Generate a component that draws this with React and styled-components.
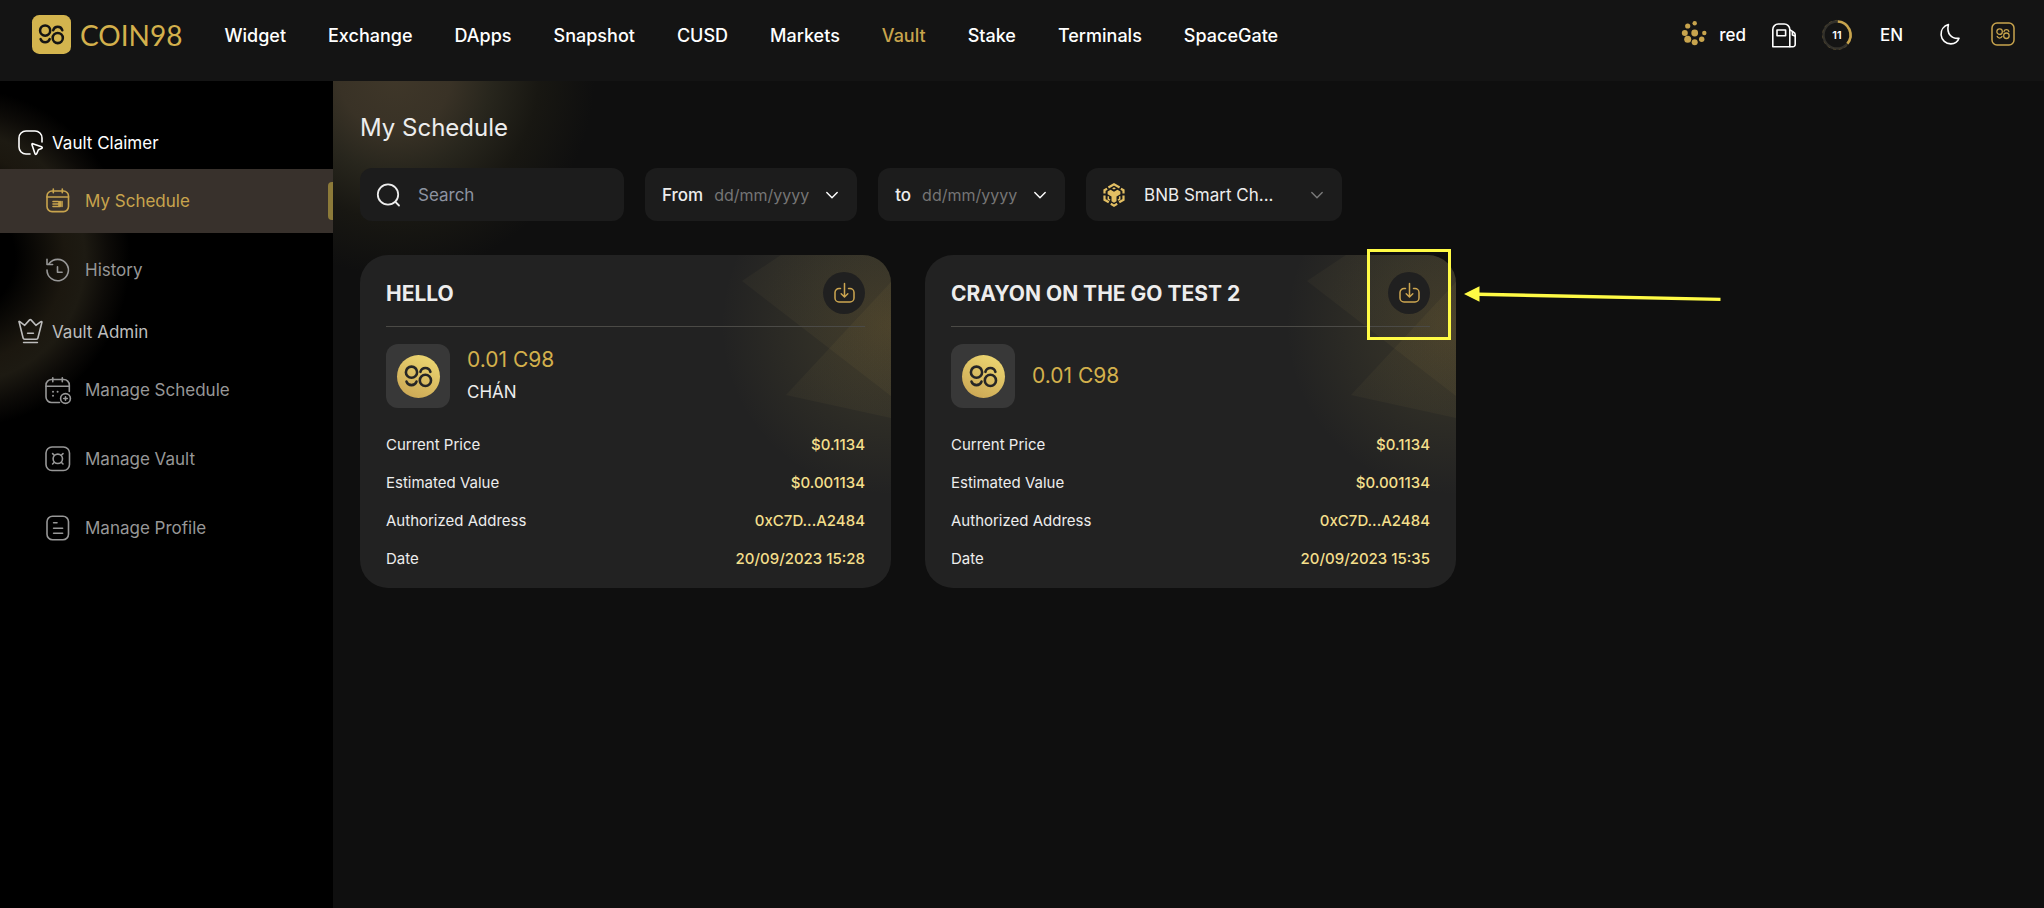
import React from 'react';
import styled, { createGlobalStyle, css } from 'styled-components';

const GOLD = '#c8a44d';

const GlobalStyle = createGlobalStyle`
  *, *::before, *::after { box-sizing: border-box; }
  body {
    margin: 0;
    background: #0f0f0f;
    color: #ededed;
    font-family: Inter, "Liberation Sans", sans-serif;
    font-size: 17px;
    -webkit-font-smoothing: antialiased;
  }
  h1, h2, h3, p, ul, dl, dd { margin: 0; padding: 0; }
  button, input, select { font: inherit; color: inherit; border: 0; background: none; padding: 0; outline: 0; }
  button { cursor: pointer; }
  a { color: inherit; text-decoration: none; }
  svg { display: block; flex: none; overflow: visible; }
`;

/* ---------- page frame ---------- */

const Page = styled.div`
  display: flex;
  flex-direction: column;
  min-height: 100vh;
`;

const Header = styled.header`
  display: flex;
  align-items: center;
  height: 81px;
  padding: 0 29px 12px 32px;
  background: #141414;
`;

const Brand = styled.a`
  display: flex;
  align-items: center;
  gap: 9px;
  margin-right: 42px;
`;

const Wordmark = styled.span`
  font-family: Lato, "Liberation Sans", sans-serif;
  font-size: 28px;
  line-height: 32px;
  color: #d3b04c;
`;

const Nav = styled.nav`
  display: flex;
  gap: 42px;
  padding-top: 1px;
  font-size: 18px;
  font-weight: 500;
`;

const NavLink = styled.a`
  color: ${(p) => (p.$active ? GOLD : '#ffffff')};
`;

const Tools = styled.div`
  display: flex;
  align-items: center;
  gap: 26px;
  margin-left: auto;
  color: #ffffff;
`;

const Wallet = styled.button`
  display: flex;
  align-items: center;
  gap: 12px;
  font-size: 17px;
  font-weight: 500;
`;

const IconButton = styled.button`
  display: grid;
  place-items: center;
  color: ${(p) => (p.$gold ? GOLD : '#ffffff')};
`;

const Language = styled.button`
  padding: 0 12px 0 2px;
  font-size: 17px;
  font-weight: 500;
`;

const Progress = styled.div`
  display: grid;
  place-items: center;
  width: 30px;
  height: 30px;
  font-size: 11px;
  font-weight: 600;

  > * { grid-area: 1 / 1; }
`;

const Body = styled.div`
  display: flex;
  flex: 1;
`;

/* ---------- sidebar ---------- */

const Sidebar = styled.aside`
  flex: 0 0 333px;
  padding-top: 37px;
  background:
    radial-gradient(circle at -40px 177px, transparent 55px, #1b170f 105px, #1d1a12 125px, #0d0b08 148px, transparent 170px) 0 0 / 100% 343px no-repeat,
    #000000;
`;

const Group = styled.h2`
  display: flex;
  align-items: center;
  gap: 9px;
  height: 51px;
  padding-left: 18px;
  padding-bottom: 2px;
  font-size: 17px;
  font-weight: 400;
  color: ${(p) => (p.$muted ? '#bdbdbd' : '#ffffff')};
`;

const Links = styled.nav`
  display: flex;
  flex-direction: column;
  gap: 5px;
  margin-bottom: 5px;
`;

const SideLink = styled.a`
  display: flex;
  align-items: center;
  gap: 14px;
  height: 64px;
  padding-left: 45px;
  color: #979797;

  ${(p) => p.$active && css`
    color: ${GOLD};
    background: #38312c;

    &::after {
      content: '';
      width: 5px;
      height: 38px;
      margin-left: auto;
      border-radius: 4px 0 0 4px;
      background: #8c7a39;
    }
  `}
`;

/* ---------- content ---------- */

const Main = styled.main`
  flex: 1;
  min-width: 0;
  padding: 31px 23px 40px 27px;
  background:
    radial-gradient(circle 200px at 62px -6px, #3f3729 0, #393226 28%, #28261d 48%, #181712 72%, #0f0f0f 100%) 0 0 / 400px 200px no-repeat,
    #0f0f0f;
`;

const Title = styled.h1`
  margin-bottom: 24px;
  font-size: 24px;
  font-weight: 400;
  line-height: 32px;
`;

const Filters = styled.form`
  display: flex;
  flex-wrap: wrap;
  gap: 21px;
  margin-bottom: 34px;
`;

const Field = styled.label`
  display: flex;
  align-items: center;
  height: 53px;
  padding: 0 19px 0 17px;
  border-radius: 12px;
  background: #1c1c1c;
`;

const SearchField = styled(Field)`
  flex: 0 0 264px;
  gap: 17px;
  min-width: 0;
`;

const SearchInput = styled.input`
  flex: 1;
  width: 100%;
  min-width: 0;

  &::placeholder { color: #8d93a1; opacity: 1; }
`;

const DateLabel = styled.span`
  margin-right: 11px;
  font-weight: 500;
`;

const DateInput = styled.input`
  width: 97px;
  margin-right: 15px;
  font-size: 16px;

  &::placeholder { color: #757575; opacity: 1; }
`;

const ChainField = styled(Field)`
  flex: 0 0 256px;
  gap: 19px;
`;

const ChainSelect = styled.select`
  flex: 1;
  min-width: 0;
  appearance: none;
`;

const Cards = styled.div`
  display: grid;
  grid-template-columns: repeat(3, 1fr);
  gap: 34px;
`;

const Card = styled.article`
  position: relative;
  isolation: isolate;
  padding: 17px 26px 19px;
  border-radius: 28px;
  background: #222222;
`;

const Backdrop = styled.div`
  position: absolute;
  inset: 0;
  z-index: -1;
  display: flex;
  justify-content: flex-end;
  overflow: hidden;
  border-radius: inherit;
`;

const CardHead = styled.header`
  display: flex;
  align-items: center;
  justify-content: space-between;
  padding-bottom: 12px;
  border-bottom: 1px solid #4b4a46;
`;

const CardTitle = styled.h3`
  font-size: 21px;
  font-weight: 700;
`;

const ClaimSlot = styled.div`
  position: relative;
`;

const ClaimButton = styled.button`
  display: grid;
  place-items: center;
  width: 42px;
  height: 42px;
  border-radius: 50%;
  background: #202020;
  color: #cda650;
`;

const Highlight = styled.div`
  position: absolute;
  left: -21px;
  top: -23px;
  width: 84px;
  height: 91px;
  border: 3px solid #fffb45;
  pointer-events: none;
`;

const Arrow = styled.svg`
  position: absolute;
  left: 76px;
  top: 12px;
  pointer-events: none;
`;

const Token = styled.div`
  display: flex;
  align-items: center;
  gap: 17px;
  margin: 17px 0 27px;
`;

const TokenIcon = styled.div`
  display: grid;
  place-items: center;
  width: 64px;
  height: 64px;
  border-radius: 12px;
  background: #383838;
`;

const Amount = styled.p`
  font-size: 21px;
  line-height: 32px;
  color: #d3b04c;
`;

const Note = styled.p`
  font-size: 17px;
  line-height: 32px;
`;

const Details = styled.dl`
  display: grid;
  gap: 18px;
  font-size: 15px;
  line-height: 20px;
`;

const Detail = styled.div`
  display: flex;
  justify-content: space-between;

  dd { color: #f4df8b; font-weight: 500; }
`;

/* ---------- drawings ---------- */

const Emblem = ({ width = 2.6 }) => (
  <g fill="none" strokeWidth={width} strokeLinecap="round">
    <circle cx="14.5" cy="17.2" r="5.6" />
    <circle cx="28.4" cy="25.4" r="5.6" />
    <path d="M23.4 16.8a5.2 5.2 0 0 1 10 0" />
    <path d="M9.5 26.6a5.3 5.3 0 0 0 10 0" />
  </g>
);

const LogoMark = () => (
  <svg width="39" height="39" viewBox="0 0 43 43" stroke="#141414" aria-hidden="true">
    <rect width="43" height="43" rx="8" fill="#d3b44e" stroke="none" />
    <Emblem width={2.8} />
  </svg>
);

const Coin = () => (
  <svg width="43" height="43" viewBox="0 0 43 43" stroke="#262626" aria-hidden="true">
    <defs>
      <linearGradient id="coin" x1="0.25" y1="1" x2="0.75" y2="0">
        <stop offset="0" stopColor="#cba755" />
        <stop offset="1" stopColor="#ecd671" />
      </linearGradient>
    </defs>
    <circle cx="21.5" cy="21.5" r="21.5" fill="url(#coin)" stroke="none" />
    <Emblem />
  </svg>
);

const BadgeIcon = () => (
  <svg width="24" height="24" viewBox="0 0 24 24" fill="none" stroke="currentColor" aria-hidden="true">
    <rect x="1" y="0" width="22" height="22" rx="5" strokeWidth="1.5" />
    <g transform="translate(1.5 0.3) scale(0.49)"><Emblem width={2.6} /></g>
  </svg>
);

const DotsIcon = () => (
  <svg width="25" height="29" viewBox="0 0 25 29" fill={GOLD} aria-hidden="true">
    {[[12.7, 3.3, 2.2], [5.7, 6, 2.6], [2.8, 13, 3], [12.7, 13, 3.4], [22.3, 13, 2.2], [5.7, 19.3, 3.5], [12.7, 22.3, 3], [19.7, 19.3, 2.7]].map(([x, y, r]) => (
      <circle key={`${x}-${y}`} cx={x} cy={y} r={r} />
    ))}
  </svg>
);

const Line = ({ size = 26, stroke = 1.6, children }) => (
  <svg width={size} height={size} viewBox={`0 0 ${size} ${size}`} fill="none" stroke="currentColor" strokeWidth={stroke} strokeLinecap="round" strokeLinejoin="round" aria-hidden="true">
    {children}
  </svg>
);

const GasIcon = () => (
  <Line size={24}>
    <path d="M.8 23.800V6.500A5.500 5.500 0 0 1 6.300 1h6a5.500 5.500 0 0 1 5.500 5.500v17.300z" />
    <rect x="5" y="7" width="8.6" height="5.8" />
    <path d="M18 6.800l3.600 2.400a3 3 0 0 1 1.600 2.600v9.400a2.400 2.400 0 0 1-2.400 2.600H18" />
    <path d="M20.400 9v3l2.600 1" />
  </Line>
);

const MoonIcon = () => (
  <Line size={24}>
    <path d="M7.400 1.600C2.800 3-.4 7 .1 12c.5 5.200 4.700 8.900 9.700 8.900 3.900 0 7-2.100 8.200-5.600C10.800 16 5.200 11 7.400 1.600z" />
  </Line>
);

const RingIcon = () => (
  <svg width="30" height="30" viewBox="0 0 30 30" fill="none" aria-hidden="true">
    <circle cx="15" cy="15" r="13.5" stroke="#33312b" strokeWidth="2.4" />
    <circle cx="15" cy="15" r="14.6" stroke="#6a5a35" strokeWidth="0.5" strokeDasharray="3 3" />
    <path d="M15.800 1.500A13.500 13.500 0 0 1 25.400 23.600" stroke={GOLD} strokeWidth="2.6" />
  </svg>
);

const ClaimerIcon = () => (
  <Line size={25}>
    <path d="M24 12V8a7 7 0 0 0-7-7H8a7 7 0 0 0-7 7v9a7 7 0 0 0 7 7h4" />
    <path d="M14.800 13.700l8.700 3c1 .4 1 1.300.1 1.700l-3.200 1.400-1.700 3.900c-.4.900-1.500.9-1.800-.1l-2.900-8.900c-.2-.7.200-1.200.8-1z" />
  </Line>
);

const CrownIcon = () => (
  <Line size={25}>
    <path d="M1.200 3.300c-.6-.8-.2-1.100.6-.7L6.700 6.300 11.600.9q.7-.7 1.400 0l4.900 5.400 5-3.600c.8-.5 1.200-.1 1 .7L19.900 19q-.3 1.200-1.500 1.200H6.600q-1.200 0-1.500-1.200z" />
    <path d="M9.600 14.200h5.800M5.600 23.500h13.800" />
  </Line>
);

const ScheduleIcon = () => (
  <Line>
    <rect x="2" y="3" width="21.5" height="20.6" rx="5" />
    <path d="M2 9h21.500M8.300 1v3.800M17.300 1v3.800" />
    <path d="M8 13.500h5M8 16h5M8 18.500h5M14 13.500v5M15.200 13.500v5M17 13.500v5" />
  </Line>
);

const HistoryIcon = () => (
  <Line>
    <path d="M2 13a10.700 10.700 0 1 0 2-6.200" />
    <path d="M2 2.200v5.300h5.600M12.500 9.800v5.400h4.600" />
  </Line>
);

const ManageScheduleIcon = () => (
  <Line>
    <path d="M24.300 14.500V8a5.500 5.500 0 0 0-5.500-5.500H6.500A5.500 5.500 0 0 0 1 8v12a5.500 5.500 0 0 0 5.500 5.500h8" />
    <path d="M1 9.300h23.300M7.800.7v4M17.300.7v4" />
    <circle cx="20.5" cy="21.5" r="4.9" />
    <path d="M20.500 19.700v3.600M18.700 21.500h3.600" />
    <path strokeWidth="2" d="M8 14.700h.01M12.600 14.700h.01M8 18.700h.01" />
  </Line>
);

const ManageVaultIcon = () => (
  <Line>
    <rect x="1" y="1" width="23.5" height="23.5" rx="6" />
    <circle cx="12.8" cy="12.8" r="4.7" />
    <path d="M9.300 9.300L7.600 7.600M16.300 9.300L18 7.600M9.300 16.300L7.600 18M16.300 16.300L18 18" />
  </Line>
);

const ProfileIcon = () => (
  <Line>
    <rect x="2" y="1.2" width="21.5" height="23.5" rx="5.5" />
    <path d="M8.600 7.800H12M8.600 13.200h9M8.600 18.300h9" />
  </Line>
);

const SearchIcon = () => (
  <Line size={24} stroke={1.8}>
    <circle cx="11" cy="11.5" r="10.2" />
    <path d="M18.500 19l3.500 3.500" />
  </Line>
);

const Chevron = ({ color = '#ffffff' }) => (
  <svg width="12" height="12" viewBox="0 0 12 12" fill="none" stroke={color} strokeWidth="1.4" strokeLinecap="round" strokeLinejoin="round" aria-hidden="true">
    <path d="M.8 3.500L6 8.800l5.200-5.300" />
  </svg>
);

const ChainIcon = () => (
  <svg width="22" height="24" viewBox="0 0 22 24" fill="none" stroke="#e3bf63" strokeWidth="2.2" aria-hidden="true">
    <path d="M5.400 4.500L11 1.300l5.600 3.200" />
    <path d="M1.500 10.500V7.200l2.600-1.500M20.500 10.500V7.200l-2.600-1.500" />
    <path d="M1.500 12.600v4.200l4.300 2.500M20.500 12.600v4.200l-4.300 2.500" />
    <path d="M7.800 20.800l3.200 1.900 3.200-1.900" />
    <path d="M5.300 13.200v3l1.800 1M16.700 13.200v3l-1.800 1" strokeWidth="1.5" />
    <path d="M11 4.300l1.900 1.100L11 6.500 9.100 5.400zM4.600 8.500l3-1.700L11 8.700l3.400-1.900 3 1.700v2.700l-3.900 2.300v4.800L11 19.700l-2.500-1.400v-4.800l-3.900-2.300z" fill="#e3bf63" stroke="none" />
  </svg>
);

const ClaimIcon = () => (
  <svg width="21" height="20" viewBox="0 0 21 20" fill="none" stroke="currentColor" strokeWidth="1.5" strokeLinecap="round" strokeLinejoin="round" aria-hidden="true">
    <path d="M6.500 5.500H5a4 4 0 0 0-4 4V15a4 4 0 0 0 4 4h11a4 4 0 0 0 4-4V9.500a4 4 0 0 0-4-4h-1.500" />
    <path d="M10.500.5v13M7.200 10.800l3.300 3.200 3.300-3.200" />
  </svg>
);

const Facets = () => (
  <svg width="220" height="240" viewBox="0 0 220 240" aria-hidden="true">
    <defs>
      <radialGradient id="glow" gradientUnits="userSpaceOnUse" cx="220" cy="70" r="170">
        <stop offset="0" stopColor="#c9a548" stopOpacity="0.15" />
        <stop offset="0.5" stopColor="#b3a250" stopOpacity="0.09" />
        <stop offset="1" stopColor="#b3a250" stopOpacity="0" />
      </radialGradient>
      <radialGradient id="facet" gradientUnits="userSpaceOnUse" cx="210" cy="70" r="170">
        <stop offset="0" stopColor="#c9a548" stopOpacity="0.06" />
        <stop offset="1" stopColor="#c0b070" stopOpacity="0.04" />
      </radialGradient>
    </defs>
    <rect width="220" height="240" fill="url(#glow)" />
    <path d="M71 26L110 0H220V141z" fill="url(#facet)" />
    <path d="M115 140L220 27V163z" fill="url(#facet)" />
  </svg>
);

/* ---------- data ---------- */

const navItems = ['Widget', 'Exchange', 'DApps', 'Snapshot', 'CUSD', 'Markets', 'Vault', 'Stake', 'Terminals', 'SpaceGate'];

const schedules = [
  { title: 'HELLO', note: 'CHÁN', date: '20/09/2023 15:28' },
  { title: 'CRAYON ON THE GO TEST 2', date: '20/09/2023 15:35', highlighted: true },
];

function ScheduleCard({ title, note, date, highlighted }) {
  return (
    <Card>
      <Backdrop><Facets /></Backdrop>
      <CardHead>
        <CardTitle>{title}</CardTitle>
        <ClaimSlot>
          <ClaimButton type="button" aria-label="Claim"><ClaimIcon /></ClaimButton>
          {highlighted && (
            <>
              <Highlight />
              <Arrow width="258" height="20" viewBox="0 0 258 20" aria-hidden="true">
                <path d="M0 10L15.500 2.300V17.800z" fill="#fffb45" />
                <path d="M14 10.200L256.500 15.400" stroke="#fffb45" strokeWidth="3.4" />
              </Arrow>
            </>
          )}
        </ClaimSlot>
      </CardHead>
      <Token>
        <TokenIcon><Coin /></TokenIcon>
        <div>
          <Amount>0.01 C98</Amount>
          {note && <Note>{note}</Note>}
        </div>
      </Token>
      <Details>
        <Detail><dt>Current Price</dt><dd>$0.1134</dd></Detail>
        <Detail><dt>Estimated Value</dt><dd>$0.001134</dd></Detail>
        <Detail><dt>Authorized Address</dt><dd>0xC7D...A2484</dd></Detail>
        <Detail><dt>Date</dt><dd>{date}</dd></Detail>
      </Details>
    </Card>
  );
}

export default function App() {
  return (
    <Page>
      <GlobalStyle />
      <Header>
        <Brand href="#">
          <LogoMark />
          <Wordmark>COIN98</Wordmark>
        </Brand>
        <Nav>
          {navItems.map((item) => (
            <NavLink key={item} href="#" $active={item === 'Vault'}>{item}</NavLink>
          ))}
        </Nav>
        <Tools>
          <Wallet type="button"><DotsIcon />red</Wallet>
          <IconButton type="button" aria-label="Gas"><GasIcon /></IconButton>
          <Progress><RingIcon /><span>11</span></Progress>
          <Language type="button">EN</Language>
          <IconButton type="button" aria-label="Theme"><MoonIcon /></IconButton>
          <IconButton type="button" $gold aria-label="Apps"><BadgeIcon /></IconButton>
        </Tools>
      </Header>
      <Body>
        <Sidebar>
          <Group><ClaimerIcon />Vault Claimer</Group>
          <Links>
            <SideLink href="#" $active><ScheduleIcon />My Schedule</SideLink>
            <SideLink href="#"><HistoryIcon />History</SideLink>
          </Links>
          <Group $muted><CrownIcon />Vault Admin</Group>
          <Links>
            <SideLink href="#"><ManageScheduleIcon />Manage Schedule</SideLink>
            <SideLink href="#"><ManageVaultIcon />Manage Vault</SideLink>
            <SideLink href="#"><ProfileIcon />Manage Profile</SideLink>
          </Links>
        </Sidebar>
        <Main>
          <Title>My Schedule</Title>
          <Filters>
            <SearchField>
              <SearchIcon />
              <SearchInput type="text" placeholder="Search" aria-label="Search" />
            </SearchField>
            <Field>
              <DateLabel>From</DateLabel>
              <DateInput type="text" placeholder="dd/mm/yyyy" />
              <Chevron />
            </Field>
            <Field>
              <DateLabel>to</DateLabel>
              <DateInput type="text" placeholder="dd/mm/yyyy" />
              <Chevron />
            </Field>
            <ChainField>
              <ChainIcon />
              <ChainSelect aria-label="Chain">
                <option>BNB Smart Ch...</option>
              </ChainSelect>
              <Chevron color="#7a7a7a" />
            </ChainField>
          </Filters>
          <Cards>
            {schedules.map((schedule) => (
              <ScheduleCard key={schedule.title} {...schedule} />
            ))}
          </Cards>
        </Main>
      </Body>
    </Page>
  );
}
